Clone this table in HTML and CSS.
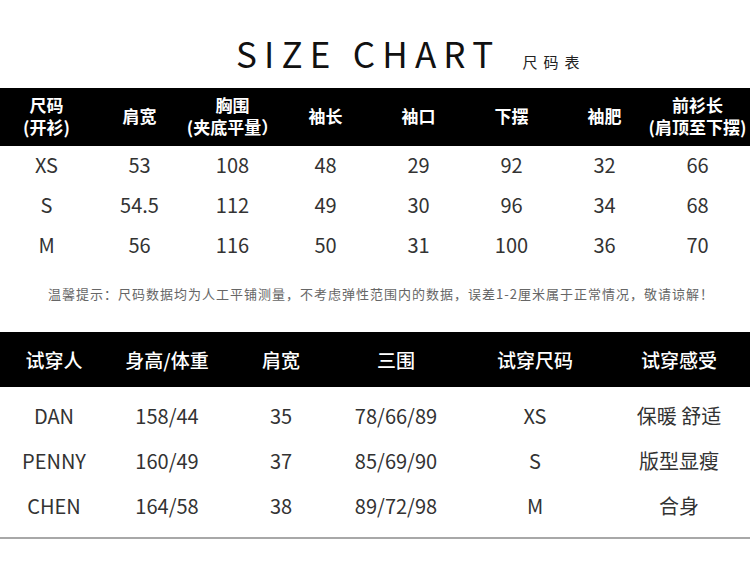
FILE: index.html
```html
<!DOCTYPE html>
<html lang="zh-CN">
<head>
<meta charset="utf-8">
<title>Size Chart</title>
<link rel="stylesheet" href="styles.css">
</head>
<body>
<div class="page">
  <div class="title-row">
    <h1 class="title">SIZE CHART</h1>
    <span class="subtitle">尺码表</span>
  </div>

  <div class="size-table">
    <div class="head-row">
      <div class="cell">尺码<br>(开衫)</div>
      <div class="cell">肩宽</div>
      <div class="cell">胸围<br>(夹底平量）</div>
      <div class="cell">袖长</div>
      <div class="cell">袖口</div>
      <div class="cell">下摆</div>
      <div class="cell">袖肥</div>
      <div class="cell">前衫长<br>(肩顶至下摆)</div>
    </div>
    <div class="data-row">
      <div class="cell">XS</div><div class="cell">53</div><div class="cell">108</div><div class="cell">48</div>
      <div class="cell">29</div><div class="cell">92</div><div class="cell">32</div><div class="cell">66</div>
    </div>
    <div class="data-row">
      <div class="cell">S</div><div class="cell">54.5</div><div class="cell">112</div><div class="cell">49</div>
      <div class="cell">30</div><div class="cell">96</div><div class="cell">34</div><div class="cell">68</div>
    </div>
    <div class="data-row">
      <div class="cell">M</div><div class="cell">56</div><div class="cell">116</div><div class="cell">50</div>
      <div class="cell">31</div><div class="cell">100</div><div class="cell">36</div><div class="cell">70</div>
    </div>
  </div>

  <p class="note">温馨提示：尺码数据均为人工平铺测量，不考虑弹性范围内的数据，误差1-2厘米属于正常情况，敬请谅解！</p>

  <div class="try-table">
    <div class="head-row">
      <div class="cell">试穿人</div>
      <div class="cell">身高/体重</div>
      <div class="cell">肩宽</div>
      <div class="cell">三围</div>
      <div class="cell">试穿尺码</div>
      <div class="cell">试穿感受</div>
    </div>
    <div class="rows">
      <div class="data-row">
        <div class="cell">DAN</div><div class="cell">158/44</div><div class="cell">35</div>
        <div class="cell">78/66/89</div><div class="cell">XS</div><div class="cell">保暖 舒适</div>
      </div>
      <div class="data-row">
        <div class="cell">PENNY</div><div class="cell">160/49</div><div class="cell">37</div>
        <div class="cell">85/69/90</div><div class="cell">S</div><div class="cell">版型显瘦</div>
      </div>
      <div class="data-row">
        <div class="cell">CHEN</div><div class="cell">164/58</div><div class="cell">38</div>
        <div class="cell">89/72/98</div><div class="cell">M</div><div class="cell">合身</div>
      </div>
    </div>
  </div>
  <div class="rule"></div>
</div>
</body>
</html>
```

FILE: styles.css
```css
* { box-sizing: border-box; }
html, body { margin: 0; padding: 0; background: #fff; }
body {
  font-family: "Noto Sans CJK SC", "Noto Sans", sans-serif;
  color: #333;
  width: 750px;
  height: 566px;
  overflow: hidden;
}
.page { display: flex; flex-direction: column; }

.title-row {
  display: flex;
  align-items: baseline;
  padding: 32px 0 0 236px;
  height: 88px;
}
.title {
  margin: 0;
  font-size: 35px;
  line-height: 42px;
  font-weight: 400;
  letter-spacing: 7.2px;
  color: #111;
}
.subtitle {
  margin-left: 22px;
  font-size: 15px;
  letter-spacing: 6px;
  color: #222;
}

.size-table .head-row,
.size-table .data-row {
  display: grid;
  grid-template-columns: repeat(8, 93px);
}
.size-table .head-row {
  background: #000;
  color: #fff;
  height: 58px;
  font-weight: 700;
  font-size: 17px;
  line-height: 22px;
}
.cell {
  display: flex;
  align-items: center;
  justify-content: center;
  text-align: center;
  white-space: nowrap;
}
.size-table .head-row .cell { padding-bottom: 2px; }
.size-table .data-row {
  height: 40px;
  font-size: 20px;
  color: #333;
  padding-bottom: 3px;
}

.note {
  margin: 0;
  height: 58px;
  padding-top: 18px;
  font-size: 13px;
  line-height: 20px;
  letter-spacing: 1px;
  color: #666;
  padding-left: 48px;
}

.try-table { margin-top: 8px; }
.try-table .head-row,
.try-table .data-row {
  display: grid;
  grid-template-columns: 108px 118px 110px 120px 158px 130px;
}
.try-table .head-row {
  background: #000;
  color: #fff;
  height: 55px;
  font-size: 19px;
  font-weight: 500;
}
.try-table .rows { padding-top: 7px; }
.try-table .data-row {
  height: 45px;
  font-size: 20px;
  color: #333;
  padding-bottom: 2px;
}

.rule {
  margin-top: 8px;
  height: 2px;
  background: #a8a8a8;
  width: 750px;
}
```
